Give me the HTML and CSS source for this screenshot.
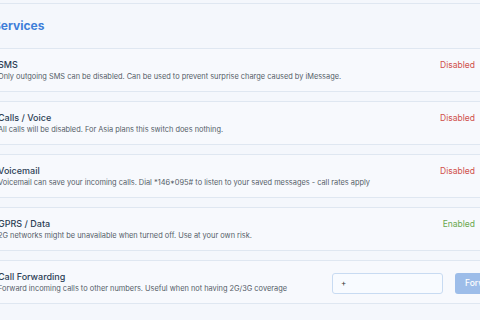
FILE: index.html
```html
<!DOCTYPE html>
<html lang="en">
  <head>
    <meta charset="UTF-8" />
    <meta name="viewport" content="width=device-width, initial-scale=1.0" />
    <title>Services</title>
    <link rel="stylesheet" href="styles.css">
  </head>
  <body>
    <div class="page">
      <div class="card-above"></div>
      <h2 class="section-title">Services</h2>
      <div class="services">
        <div class="service">
          <div class="service-info">
            <div class="service-name">SMS</div>
            <div class="service-desc">Only outgoing SMS can be disabled. Can be used to prevent surprise charge caused by iMessage.</div>
          </div>
          <span class="status disabled">Disabled</span>
        </div>
        <div class="service">
          <div class="service-info">
            <div class="service-name">Calls / Voice</div>
            <div class="service-desc">All calls will be disabled. For Asia plans this switch does nothing.</div>
          </div>
          <span class="status disabled">Disabled</span>
        </div>
        <div class="service">
          <div class="service-info">
            <div class="service-name">Voicemail</div>
            <div class="service-desc">Voicemail can save your incoming calls. Dial *146*095# to listen to your saved messages - call rates apply</div>
          </div>
          <span class="status disabled">Disabled</span>
        </div>
        <div class="service">
          <div class="service-info">
            <div class="service-name">GPRS / Data</div>
            <div class="service-desc">2G networks might be unavailable when turned off. Use at your own risk.</div>
          </div>
          <span class="status enabled">Enabled</span>
        </div>
        <div class="service forwarding">
          <div class="service-info">
            <div class="service-name">Call Forwarding</div>
            <div class="service-desc">Forward incoming calls to other numbers. Useful when not having 2G/3G coverage</div>
          </div>
          <div class="forward-form">
            <input type="text" class="forward-input" value="+" />
            <button type="button" class="forward-btn" disabled>Forward</button>
          </div>
        </div>
      </div>
    </div>
  </body>
</html>
```

FILE: styles.css
```css
html,
body {
  margin: 0;
  background: #f4f7fc;
}

body {
  font-family: Inter, "Noto Sans", sans-serif;
  overflow: hidden;
}

.page {
  margin: 0 -8px 0 -15px;
}

.card-above {
  height: 3px;
  border-bottom: 1px solid #dfe7f1;
}

.section-title {
  margin: 0;
  padding: 14px 0 0 8px;
  height: 31px;
  box-sizing: border-box;
  font-size: 12px;
  line-height: 16px;
  font-weight: 700;
  color: #3f7fd9;
}

.services {
  margin-top: 13px;
  display: flex;
  flex-direction: column;
  gap: 9px;
}

.service {
  display: flex;
  justify-content: space-between;
  align-items: flex-start;
  padding: 10px 12px 8px 12px;
  border: 1px solid #dfe7f1;
  border-radius: 3px;
  background: #f7f9fd;
}

.service-name {
  font-size: 9px;
  line-height: 12px;
  font-weight: 500;
  color: #2c3e55;
}

.service-desc {
  font-size: 7.4px;
  line-height: 12px;
  color: #555d68;
}

.status {
  font-size: 8.5px;
  line-height: 12px;
}

.status.disabled {
  color: #d0504b;
}

.status.enabled {
  color: #6aa84f;
}

.service.forwarding {
  align-items: center;
}

.forward-form {
  display: flex;
  gap: 12px;
  margin-right: -60px;
}

.forward-input {
  width: 111px;
  height: 21px;
  box-sizing: border-box;
  padding: 0 8px;
  border: 1px solid #c8dbf2;
  border-radius: 3px;
  background: #f8fbff;
  font-family: inherit;
  font-size: 8px;
  color: #333;
}

.forward-btn {
  width: 80px;
  height: 21px;
  border: 0;
  border-radius: 3px;
  background: #9dbde9;
  color: #fff;
  font-family: inherit;
  font-size: 8.5px;
  font-weight: 500;
  text-align: left;
  padding: 0 0 0 10px;
}
```
